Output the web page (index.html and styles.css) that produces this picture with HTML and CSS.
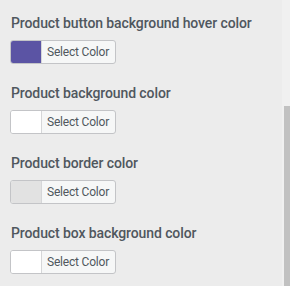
FILE: index.html
```html
<!DOCTYPE html>
<html lang="en">
<head>
  <meta charset="UTF-8" />
  <meta name="viewport" content="width=device-width, initial-scale=1.0"/>
  <title>Product colors</title>
  <link rel="stylesheet" href="styles.css">
</head>
<body>
  <div class="settings">
    <div class="field">
      <h3>Product button background hover color</h3>
      <button class="color-btn"><span class="swatch purple"></span><span class="label">Select Color</span></button>
    </div>
    <div class="field">
      <h3>Product background color</h3>
      <button class="color-btn"><span class="swatch white"></span><span class="label">Select Color</span></button>
    </div>
    <div class="field">
      <h3>Product border color</h3>
      <button class="color-btn"><span class="swatch grey"></span><span class="label">Select Color</span></button>
    </div>
    <div class="field">
      <h3>Product box background color</h3>
      <button class="color-btn"><span class="swatch white"></span><span class="label">Select Color</span></button>
    </div>
  </div>

  <div class="scrollbar"><div class="thumb"></div></div>
</body>
</html>
```

FILE: styles.css
```css
body {
  margin: 0;
  background-color: #ececec;
  font-family: Roboto, "Liberation Sans", Arial, sans-serif;
  color: #50575e;
}
.settings {
  padding: 13px 10px 0 10px;
}
.field {
  margin-bottom: 19px;
}
.field h3 {
  margin: 0 0 7px 1px;
  font-size: 14px;
  line-height: 20px;
  font-weight: 500;
  letter-spacing: -0.1px;
  color: #50575e;
}
.color-btn {
  display: flex;
  align-items: stretch;
  height: 24px;
  padding: 0;
  border: 1px solid #c3c4c7;
  border-radius: 3px;
  background: #f6f7f7;
  overflow: hidden;
  cursor: pointer;
  font-family: inherit;
}
.swatch {
  width: 30px;
  border-right: 1px solid #d5d6d8;
}
.swatch.purple { background: #5b54a4; }
.swatch.white { background: #fff; }
.swatch.grey { background: #e2e2e2; }
.label {
  padding: 0 6px 0 5px;
  font-size: 12px;
  line-height: 22px;
  letter-spacing: -0.2px;
  color: #50575e;
}
.scrollbar {
  position: fixed;
  top: 0;
  right: 0;
  width: 8px;
  height: 100%;
  background: #f0f0f0;
}
.thumb {
  position: absolute;
  top: 106px;
  right: 0;
  width: 6px;
  bottom: 0;
  background: #c1c1c1;
}
```
